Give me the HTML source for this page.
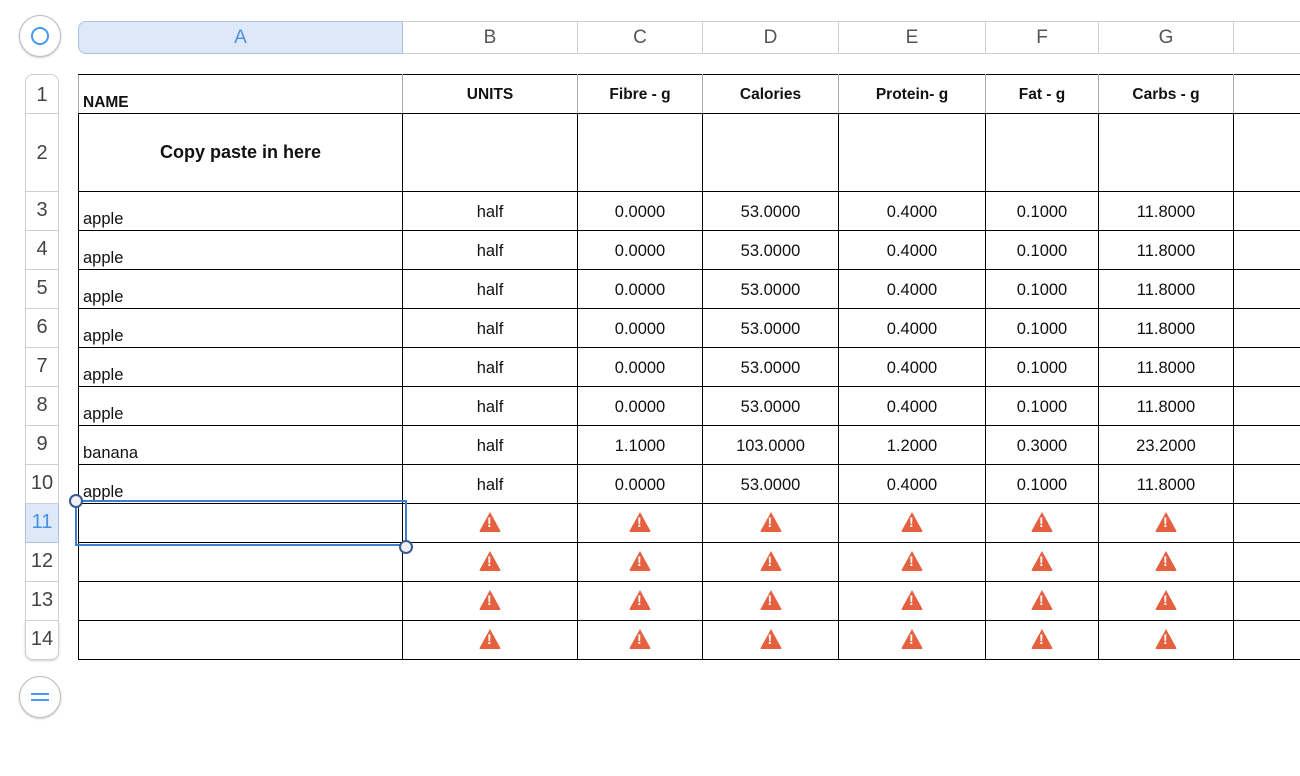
<!DOCTYPE html>
<html><head><meta charset="utf-8"><style>
body{margin:0;width:1300px;height:776px;background:#fff;font-family:"Liberation Sans",sans-serif;position:relative;overflow:hidden}
.abs{position:absolute}
.colh{position:absolute;top:21px;height:33px;border:1px solid #d0d0d0;border-left:none;box-sizing:border-box;text-align:center;line-height:32px;color:#555;font-size:19px;background:#fff}
.rowh{position:absolute;left:25px;width:34px;box-sizing:border-box;border:1px solid #d0d0d0;border-top:none;text-align:center;color:#444;font-size:20px;background:#fff}
table{position:absolute;left:78px;top:74px;border-collapse:collapse;table-layout:fixed;font-size:16.5px;color:#111;width:1222px}
td{border:1px solid #000;padding:0;text-align:center;vertical-align:middle;padding-top:3px;overflow:hidden;white-space:nowrap}
td.n{text-align:left;vertical-align:bottom;padding-left:4px;padding-bottom:1px;padding-top:0}
tr.h td{font-weight:bold;font-size:15.5px;vertical-align:top;padding-top:11px;border-left-color:#aaa;border-right-color:#aaa}
tr.h td.n{vertical-align:bottom;padding-top:0}
.w{display:inline-block;width:0;height:0;border-left:11px solid transparent;border-right:11px solid transparent;border-bottom:20px solid #e4603f;position:relative;top:-3px;border-radius:2px;vertical-align:middle}
.w:after{content:"!";position:absolute;left:-3px;top:2px;color:#fff;font-size:14px;font-weight:bold;line-height:16px}
</style></head><body>
<div class="abs" style="left:19px;top:15px;width:42px;height:42px;border-radius:50%;border:1px solid #bbb;box-sizing:border-box;box-shadow:0 1px 2px #ccc"></div>
<div class="abs" style="left:31px;top:27px;width:18px;height:18px;border-radius:50%;border:2px solid #4a9af0;box-sizing:border-box"></div>
<div class="colh" style="left:78px;width:325px;border:1px solid #a9c3e3;border-radius:8px 0 0 8px;background:#dde9f9;color:#4a90e2">A</div>
<div class="colh" style="left:403px;width:175px">B</div>
<div class="colh" style="left:578px;width:125px">C</div>
<div class="colh" style="left:703px;width:136px">D</div>
<div class="colh" style="left:839px;width:147px">E</div>
<div class="colh" style="left:986px;width:113px">F</div>
<div class="colh" style="left:1099px;width:135px">G</div>
<div class="colh" style="left:1234px;width:70px"></div>
<div class="rowh" style="top:74px;height:40px;line-height:40px;border-top:1px solid #d0d0d0;border-radius:8px 8px 0 0">1</div>
<div class="rowh" style="top:114px;height:78px;line-height:78px">2</div>
<div class="rowh" style="top:192px;height:39px;line-height:37px">3</div>
<div class="rowh" style="top:231px;height:39px;line-height:37px">4</div>
<div class="rowh" style="top:270px;height:39px;line-height:37px">5</div>
<div class="rowh" style="top:309px;height:39px;line-height:37px">6</div>
<div class="rowh" style="top:348px;height:39px;line-height:37px">7</div>
<div class="rowh" style="top:387px;height:39px;line-height:37px">8</div>
<div class="rowh" style="top:426px;height:39px;line-height:37px">9</div>
<div class="rowh" style="top:465px;height:39px;line-height:37px">10</div>
<div class="rowh" style="top:504px;height:39px;line-height:37px;background:#dde9f9;color:#4a90e2;border-color:#a9c3e3">11</div>
<div class="rowh" style="top:543px;height:39px;line-height:37px">12</div>
<div class="rowh" style="top:582px;height:39px;line-height:37px">13</div>
<div class="rowh" style="top:621px;height:39px;line-height:37px;border-radius:0 0 8px 8px;box-shadow:0 1px 2px #ccc">14</div>
<div class="abs" style="left:19px;top:676px;width:42px;height:42px;border-radius:50%;border:1px solid #bbb;box-sizing:border-box;box-shadow:0 1px 2px #ccc"></div>
<div class="abs" style="left:31px;top:693px;width:18px;height:2px;background:#4a9af0"></div>
<div class="abs" style="left:31px;top:699px;width:18px;height:2px;background:#4a9af0"></div>
<table>
<colgroup><col style="width:324px"><col style="width:175px"><col style="width:125px"><col style="width:136px"><col style="width:147px"><col style="width:113px"><col style="width:135px"><col style="width:67px"></colgroup>
<tr class="h" style="height:39px"><td class="n">NAME</td><td>UNITS</td><td>Fibre - g</td><td>Calories</td><td>Protein- g</td><td>Fat - g</td><td>Carbs - g</td><td></td></tr>
<tr style="height:78px"><td style="font-weight:bold;font-size:18px;padding-top:0">Copy paste in here</td><td></td><td></td><td></td><td></td><td></td><td></td><td></td></tr>
<tr style="height:39px"><td class="n">apple</td><td>half</td><td>0.0000</td><td>53.0000</td><td>0.4000</td><td>0.1000</td><td>11.8000</td><td></td></tr>
<tr style="height:39px"><td class="n">apple</td><td>half</td><td>0.0000</td><td>53.0000</td><td>0.4000</td><td>0.1000</td><td>11.8000</td><td></td></tr>
<tr style="height:39px"><td class="n">apple</td><td>half</td><td>0.0000</td><td>53.0000</td><td>0.4000</td><td>0.1000</td><td>11.8000</td><td></td></tr>
<tr style="height:39px"><td class="n">apple</td><td>half</td><td>0.0000</td><td>53.0000</td><td>0.4000</td><td>0.1000</td><td>11.8000</td><td></td></tr>
<tr style="height:39px"><td class="n">apple</td><td>half</td><td>0.0000</td><td>53.0000</td><td>0.4000</td><td>0.1000</td><td>11.8000</td><td></td></tr>
<tr style="height:39px"><td class="n">apple</td><td>half</td><td>0.0000</td><td>53.0000</td><td>0.4000</td><td>0.1000</td><td>11.8000</td><td></td></tr>
<tr style="height:39px"><td class="n">banana</td><td>half</td><td>1.1000</td><td>103.0000</td><td>1.2000</td><td>0.3000</td><td>23.2000</td><td></td></tr>
<tr style="height:39px"><td class="n">apple</td><td>half</td><td>0.0000</td><td>53.0000</td><td>0.4000</td><td>0.1000</td><td>11.8000</td><td></td></tr>
<tr style="height:39px"><td class="n"></td><td><span class="w"></span></td><td><span class="w"></span></td><td><span class="w"></span></td><td><span class="w"></span></td><td><span class="w"></span></td><td><span class="w"></span></td><td></td></tr>
<tr style="height:39px"><td class="n"></td><td><span class="w"></span></td><td><span class="w"></span></td><td><span class="w"></span></td><td><span class="w"></span></td><td><span class="w"></span></td><td><span class="w"></span></td><td></td></tr>
<tr style="height:39px"><td class="n"></td><td><span class="w"></span></td><td><span class="w"></span></td><td><span class="w"></span></td><td><span class="w"></span></td><td><span class="w"></span></td><td><span class="w"></span></td><td></td></tr>
<tr style="height:39px"><td class="n"></td><td><span class="w"></span></td><td><span class="w"></span></td><td><span class="w"></span></td><td><span class="w"></span></td><td><span class="w"></span></td><td><span class="w"></span></td><td></td></tr>
</table>
<div class="abs" style="left:75px;top:500px;width:332px;height:46px;border:2px solid #3f7fd0;box-sizing:border-box"></div>
<div class="abs" style="left:69px;top:494px;width:10px;height:10px;border-radius:50%;border:2px solid #3d5a8f;background:#eef1f6"></div>
<div class="abs" style="left:399px;top:540px;width:10px;height:10px;border-radius:50%;border:2px solid #3d5a8f;background:#eef1f6"></div>
</body></html>
